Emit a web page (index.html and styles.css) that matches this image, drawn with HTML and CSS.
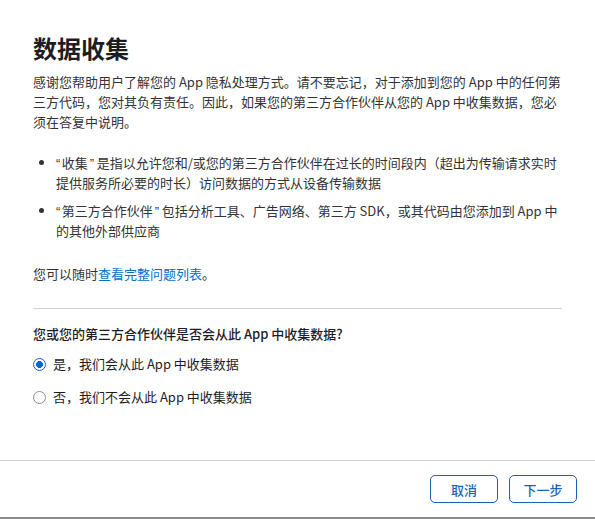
FILE: index.html
```html
<!DOCTYPE html>
<html lang="zh-CN">
<head>
<meta charset="utf-8">
<title>数据收集</title>
<link rel="stylesheet" href="styles.css">
</head>
<body>
<div class="page">
  <main class="content">
    <h1 class="title">数据收集</h1>
    <p class="intro">感谢您帮助用户了解您的 App 隐私处理方式。请不要忘记，对于添加到您的 App 中的任何第三方代码，您对其负有责任。因此，如果您的第三方合作伙伴从您的 App 中收集数据，您必须在答复中说明。</p>
    <ul class="defs">
      <li><span class="q open">“</span>收集<span class="q close">”</span>是指以允许您和/或您的第三方合作伙伴在过长的时间段内（超出为传输请求实时提供服务所必要的时长）访问数据的方式从设备传输数据</li>
      <li><span class="q open">“</span>第三方合作伙伴<span class="q close">”</span>包括分析工具、广告网络、第三方 SDK，或其代码由您添加到 App 中的其他外部供应商</li>
    </ul>
    <p class="more">您可以随时<a class="link" href="#">查看完整问题列表</a>。</p>
    <hr class="divider">
    <p class="question">您或您的第三方合作伙伴是否会从此 App 中收集数据?</p>
    <div class="options">
      <label class="option">
        <span class="radio checked"></span>
        <span>是，我们会从此 App 中收集数据</span>
      </label>
      <label class="option">
        <span class="radio"></span>
        <span>否，我们不会从此 App 中收集数据</span>
      </label>
    </div>
  </main>
  <footer class="footer">
    <button class="btn" type="button">取消</button>
    <button class="btn" type="button">下一步</button>
  </footer>
</div>
</body>
</html>
```

FILE: styles.css
```css
* { box-sizing: border-box; }
html, body {
  margin: 0;
  padding: 0;
  background: #fff;
}
body {
  font-family: "Noto Sans CJK SC", sans-serif;
  font-size: 13px;
  line-height: 20px;
  color: #333336;
}
.page {
  height: 519px;
  display: flex;
  flex-direction: column;
  border-bottom: 2px solid #8a8a8a;
}
.content {
  flex: 1;
  padding: 33px 33px 0 33px;
}
.title {
  margin: 0;
  font-size: 24px;
  line-height: 30px;
  font-weight: 700;
  color: #1d1d1f;
}
.intro {
  margin: 9px 0 0;
}
.defs {
  margin: 21px 0 0;
  padding-left: 23px;
}
.defs li + li {
  margin-top: 8px;
}
.q {
  font-family: "Liberation Sans", sans-serif;
  line-height: 1;
}
.q.open {
  margin-right: 1.5px;
}
.q.close {
  margin: 0 2.5px 0 2px;
}
.more {
  margin: 23px 0 0;
}
.link {
  color: #0070c9;
  text-decoration: none;
}
.divider {
  margin: 24px 0 0;
  border: 0;
  border-top: 1px solid #d2d2d7;
  height: 0;
}
.question {
  margin: 15px 0 0;
  font-weight: 500;
  color: #1d1d1f;
}
.options {
  margin-top: 10px;
  display: flex;
  flex-direction: column;
  gap: 13px;
}
.option {
  display: flex;
  align-items: center;
  gap: 7px;
  color: #1d1d1f;
}
.radio {
  width: 13px;
  height: 13px;
  border-radius: 50%;
  border: 1px solid #8e8e93;
  background: #fff;
  flex: none;
}
.radio.checked {
  border: 1.5px solid #0a64d8;
  background: radial-gradient(circle, #0a64d8 0 3.2px, #fff 3.7px);
}
.footer {
  height: 57px;
  border-top: 1px solid #d2d2d7;
  display: flex;
  justify-content: flex-end;
  align-items: flex-start;
  gap: 11px;
  padding: 14px 18px 0 0;
}
.btn {
  width: 68px;
  height: 28px;
  border: 1px solid #1a62b4;
  border-radius: 5px;
  background: #fff;
  color: #1a62b4;
  font-family: "Noto Sans CJK SC", sans-serif;
  font-size: 13px;
  font-weight: 500;
  padding: 0;
}
```
